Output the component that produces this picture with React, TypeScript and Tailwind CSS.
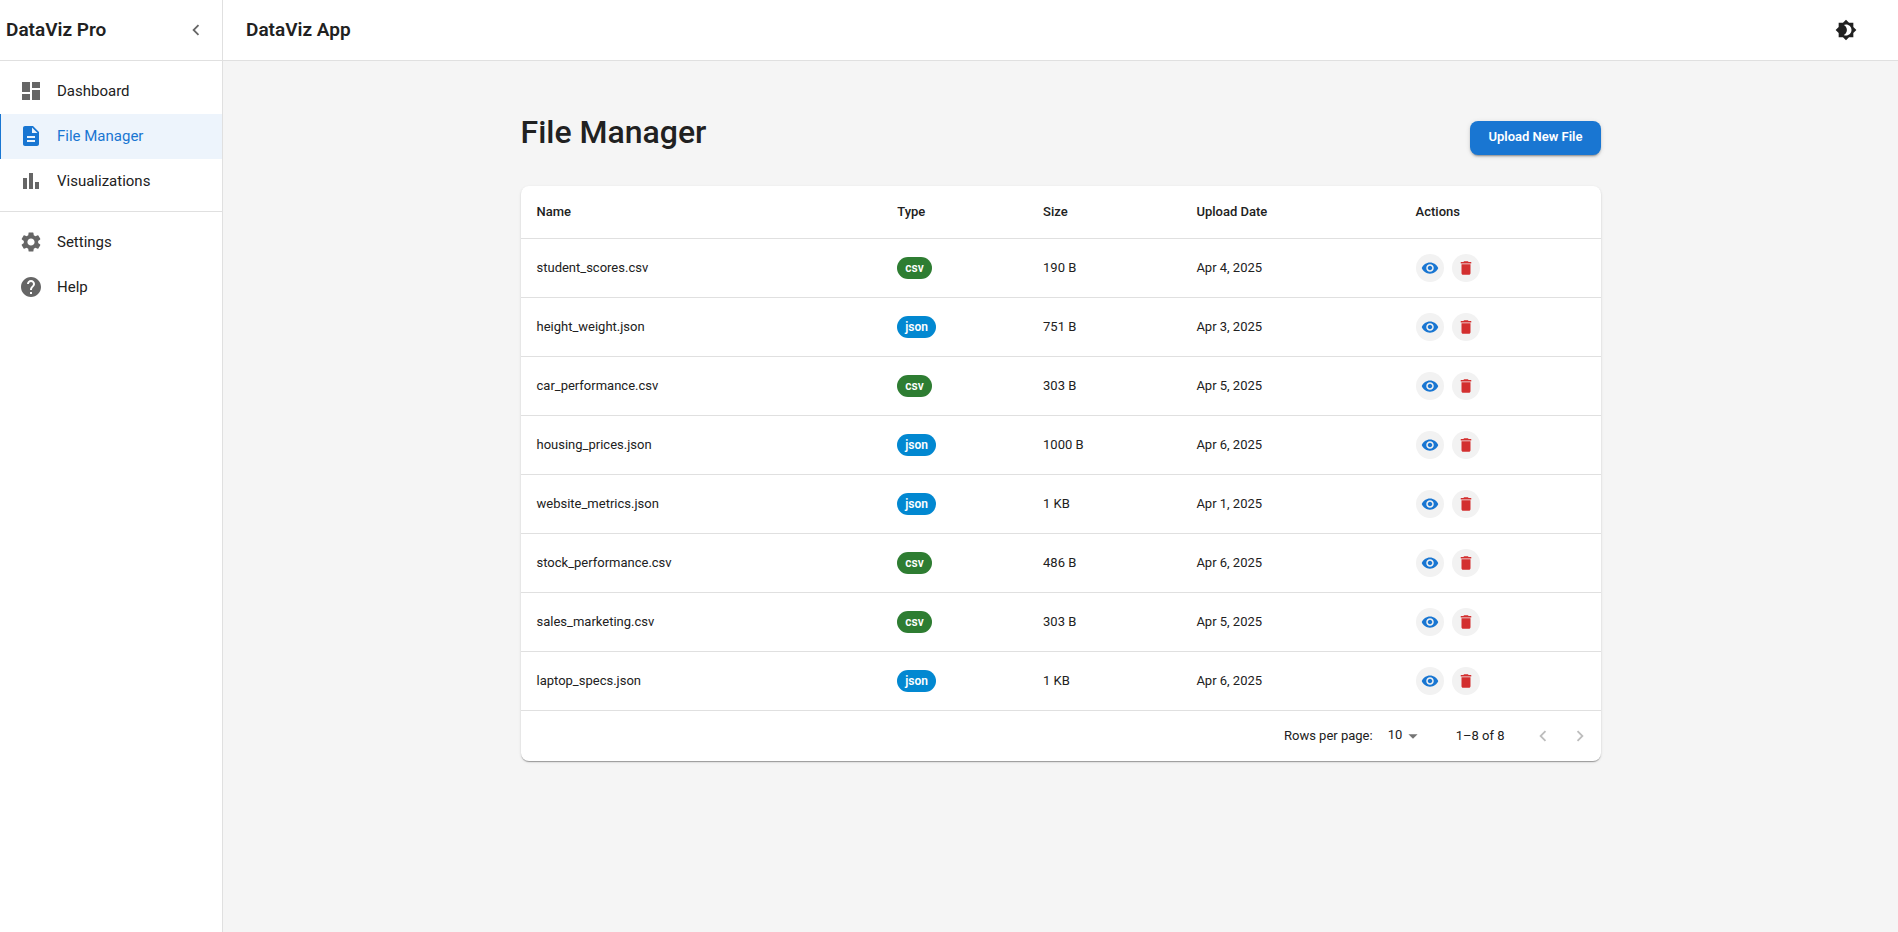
import {
  MdArrowDropDown,
  MdBarChart,
  MdBrightness4,
  MdChevronLeft,
  MdDashboard,
  MdDelete,
  MdDescription,
  MdHelp,
  MdKeyboardArrowLeft,
  MdKeyboardArrowRight,
  MdSettings,
  MdVisibility,
} from "react-icons/md";
import type { IconType } from "react-icons";

type NavEntry = { label: string; icon: IconType; active?: boolean };

type FileRow = { name: string; type: "csv" | "json"; size: string; date: string };

const primaryNav: NavEntry[] = [
  { label: "Dashboard", icon: MdDashboard },
  { label: "File Manager", icon: MdDescription, active: true },
  { label: "Visualizations", icon: MdBarChart },
];

const secondaryNav: NavEntry[] = [
  { label: "Settings", icon: MdSettings },
  { label: "Help", icon: MdHelp },
];

const files: FileRow[] = [
  { name: "student_scores.csv", type: "csv", size: "190 B", date: "Apr 4, 2025" },
  { name: "height_weight.json", type: "json", size: "751 B", date: "Apr 3, 2025" },
  { name: "car_performance.csv", type: "csv", size: "303 B", date: "Apr 5, 2025" },
  { name: "housing_prices.json", type: "json", size: "1000 B", date: "Apr 6, 2025" },
  { name: "website_metrics.json", type: "json", size: "1 KB", date: "Apr 1, 2025" },
  { name: "stock_performance.csv", type: "csv", size: "486 B", date: "Apr 6, 2025" },
  { name: "sales_marketing.csv", type: "csv", size: "303 B", date: "Apr 5, 2025" },
  { name: "laptop_specs.json", type: "json", size: "1 KB", date: "Apr 6, 2025" },
];

const columns = [
  { label: "Name", width: "w-[33.4%]" },
  { label: "Type", width: "w-[13.5%]" },
  { label: "Size", width: "w-[14.2%]" },
  { label: "Upload Date", width: "w-[20.3%]" },
  { label: "Actions", width: "w-[18.6%]" },
];

function NavList({ entries }: { entries: NavEntry[] }) {
  return (
    <ul className="pt-2 pb-[7px]">
      {entries.map(({ label, icon: Icon, active }) => (
        <li key={label}>
          <a
            href="#"
            aria-current={active ? "page" : undefined}
            className={
              active
                ? "flex h-[45px] items-center gap-[14px] border-l border-[#1976d2] bg-[#edf4fc] pb-px pl-[18px] text-[#1976d2]"
                : "flex h-[45px] items-center gap-[14px] pb-px pl-[19px] text-[#212121] hover:bg-black/5"
            }
          >
            <Icon className={active ? "size-6" : "size-6 text-[#666666]"} />
            <span className="text-[15px]">{label}</span>
          </a>
        </li>
      ))}
    </ul>
  );
}

function Sidebar() {
  return (
    <aside className="flex w-[223px] shrink-0 flex-col border-r border-[#e0e0e0] bg-white">
      <div className="flex h-[61px] items-center justify-between border-b border-[#e0e0e0] pr-[15px] pl-[6px]">
        <span className="text-[19px] font-semibold">DataViz Pro</span>
        <button type="button" aria-label="Collapse sidebar" className="text-[#666666]">
          <MdChevronLeft className="size-[22px]" />
        </button>
      </div>
      <nav className="divide-y divide-[#e0e0e0]">
        <NavList entries={primaryNav} />
        <NavList entries={secondaryNav} />
      </nav>
    </aside>
  );
}

function TypeChip({ type }: { type: FileRow["type"] }) {
  return (
    <span
      className={
        type === "csv"
          ? "inline-flex h-[22px] items-center rounded-full bg-[#2e7d32] px-2 text-xs font-semibold text-white"
          : "inline-flex h-[22px] items-center rounded-full bg-[#0288d1] px-2 text-xs font-semibold text-white"
      }
    >
      {type}
    </span>
  );
}

function Pagination() {
  return (
    <div className="flex h-[50px] items-center justify-end pr-[10px] text-[13px]">
      <label htmlFor="rows-per-page">Rows per page:</label>
      <div className="relative ml-[15px] flex items-center">
        <select
          id="rows-per-page"
          defaultValue="10"
          className="w-9 appearance-none bg-transparent pb-px"
        >
          <option>5</option>
          <option>10</option>
          <option>25</option>
        </select>
        <MdArrowDropDown className="pointer-events-none absolute right-0 size-[22px] text-[#757575]" />
      </div>
      <span className="ml-[32px]">1–8 of 8</span>
      <div className="ml-[27px] flex gap-[15px] text-[#bdbdbd]">
        <button type="button" aria-label="Previous page" disabled>
          <MdKeyboardArrowLeft className="size-[22px]" />
        </button>
        <button type="button" aria-label="Next page" disabled>
          <MdKeyboardArrowRight className="size-[22px]" />
        </button>
      </div>
    </div>
  );
}

function FileTable() {
  return (
    <section className="rounded-lg bg-white shadow-[0_2px_1px_-1px_rgba(0,0,0,0.2),0_1px_1px_0_rgba(0,0,0,0.14),0_1px_3px_0_rgba(0,0,0,0.12)]">
      <table className="w-full table-fixed text-left text-[13px]">
        <thead>
          <tr className="h-[52px] border-b border-[#e0e0e0]">
            {columns.map((column) => (
              <th key={column.label} scope="col" className={`${column.width} px-4 font-medium`}>
                {column.label}
              </th>
            ))}
          </tr>
        </thead>
        <tbody>
          {files.map((file) => (
            <tr key={file.name} className="h-[59px] border-b border-[#e0e0e0]">
              <td className="px-4">{file.name}</td>
              <td className="px-4">
                <TypeChip type={file.type} />
              </td>
              <td className="px-4">{file.size}</td>
              <td className="px-4">{file.date}</td>
              <td className="px-4">
                <div className="flex gap-2">
                  <button
                    type="button"
                    aria-label={`View ${file.name}`}
                    className="flex size-7 items-center justify-center rounded-full bg-[#f2f2f2] text-[#1976d2]"
                  >
                    <MdVisibility className="size-[18px]" />
                  </button>
                  <button
                    type="button"
                    aria-label={`Delete ${file.name}`}
                    className="flex size-7 items-center justify-center rounded-full bg-[#f2f2f2] text-[#d32f2f]"
                  >
                    <MdDelete className="size-[18px]" />
                  </button>
                </div>
              </td>
            </tr>
          ))}
        </tbody>
      </table>
      <Pagination />
    </section>
  );
}

export default function App() {
  return (
    <div className="flex min-h-screen bg-[#f5f5f5] font-[Roboto,sans-serif] text-[#212121]">
      <Sidebar />
      <div className="flex min-w-0 flex-1 flex-col">
        <header className="flex h-[61px] items-center justify-between border-b border-[#e0e0e0] bg-white pr-[41px] pl-[23px]">
          <span className="text-[19px] font-semibold">DataViz App</span>
          <button type="button" aria-label="Toggle dark mode">
            <MdBrightness4 className="size-[22px]" />
          </button>
        </header>
        <main className="mx-auto w-full max-w-[1080px] pt-[52px]">
          <div className="mb-[31px] flex items-end justify-between">
            <h1 className="pb-1 text-[32px] leading-[38px] font-medium">File Manager</h1>
            <button
              type="button"
              className="h-[34px] rounded-lg bg-[#1976d2] px-[18px] pb-[3px] text-[13px] font-semibold text-white shadow-[0_3px_1px_-2px_rgba(0,0,0,0.2),0_2px_2px_0_rgba(0,0,0,0.14),0_1px_5px_0_rgba(0,0,0,0.12)]"
            >
              Upload New File
            </button>
          </div>
          <FileTable />
        </main>
      </div>
    </div>
  );
}
